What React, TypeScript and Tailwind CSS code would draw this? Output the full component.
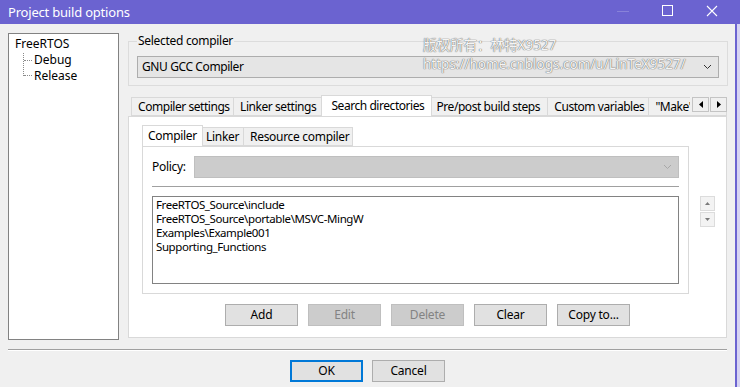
import React from "react";

const FONT = "font-['Segoe_UI','Noto_Sans',sans-serif]";

function Chevron({ color = "#333" }: { color?: string }) {
  return (
    <svg width="9" height="6" viewBox="0 0 9 6" fill="none">
      <path d="M1 1 L4.5 4.5 L8 1" stroke={color} strokeWidth="1" />
    </svg>
  );
}

function Btn({ label, disabled, primary }: { label: string; disabled?: boolean; primary?: boolean }) {
  const base = "w-[73px] h-[22px] flex items-center justify-center text-[12px] leading-none tracking-[-0.2px]";
  if (disabled)
    return <div className={`${base} bg-[#cccccc] border border-[#bfbfbf] text-[#838383]`}>{label}</div>;
  if (primary)
    return <div className={`${base} bg-[#e1e1e1] border-2 border-[#0078d7] text-black`}>{label}</div>;
  return <div className={`${base} bg-[#e1e1e1] border border-[#adadad] text-black`}>{label}</div>;
}

function TitleBar() {
  return (
    <div className="h-[24px] bg-[#6b63d0] flex items-center relative shrink-0">
      <span className="pl-[8px] text-white text-[13px] leading-none tracking-[-0.2px]">Project build options</span>
      <div className="absolute left-[617px] top-[11px] w-[12px] h-px bg-white opacity-20" />
      <div className="absolute left-[662px] top-[5px] w-[11px] h-[11px] border border-white" />
      <svg className="absolute left-[706px] top-[5px]" width="12" height="12" viewBox="0 0 12 12">
        <path d="M1 1 L11 11 M11 1 L1 11" stroke="white" strokeWidth="1.1" />
      </svg>
    </div>
  );
}

function Tree() {
  return (
    <div className="w-[111px] h-[307px] bg-white border border-[#828282] relative shrink-0 text-[12px]">
      <div className="absolute left-[5px] top-[2px] leading-[16px] px-[1px]">FreeRTOS</div>
      <div className="absolute left-[25px] top-[18px] leading-[16px]">Debug</div>
      <div className="absolute left-[25px] top-[34px] leading-[16px]">Release</div>
      <div className="absolute left-[14px] top-[19px] h-[23px] border-l border-dotted border-[#8a8a8a]" />
      <div className="absolute left-[15px] top-[26px] w-[8px] border-t border-dotted border-[#8a8a8a]" />
      <div className="absolute left-[15px] top-[41px] w-[8px] border-t border-dotted border-[#8a8a8a]" />
    </div>
  );
}

function MainTabs() {
  const tab =
    "h-[19px] border border-[#d9d9d9] bg-[#f0f0f0] -ml-px flex items-center text-[12px] tracking-[-0.45px] whitespace-nowrap overflow-hidden";
  return (
    <div className="relative h-[21px] flex items-end pl-[3px] overflow-hidden">
      <div className={`${tab} w-[105px] pl-[6px] ml-0`}>Compiler settings</div>
      <div className={`${tab} w-[92px] pl-[6px]`}>Linker settings</div>
      <div className="h-[21px] w-[113px] -ml-[2px] -mr-[2px] relative z-10 bg-white border border-b-0 border-[#d9d9d9] flex items-center pl-[9px] text-[12px] tracking-[-0.45px] whitespace-nowrap">
        Search directories
      </div>
      <div className={`${tab} w-[121px] pl-[6px]`}>Pre/post build steps</div>
      <div className={`${tab} w-[104px] pl-[6px]`}>Custom variables</div>
      <div className={`${tab} w-[80px] pl-[6px]`}>"Make" commands</div>
      <div className="absolute right-0 top-[2px] h-[15px] w-[37px] bg-[#f0f0f0] flex justify-end gap-[1px] z-20">
        <div className="w-[17px] h-[15px] bg-[#f0f0f0] border border-[#c4c4c4] flex items-center justify-center">
          <svg width="4" height="7" viewBox="0 0 4 7"><path d="M4 0 L0 3.5 L4 7 Z" fill="#000" /></svg>
        </div>
        <div className="w-[17px] h-[15px] bg-[#f0f0f0] border border-[#c4c4c4] flex items-center justify-center">
          <svg width="4" height="7" viewBox="0 0 4 7"><path d="M0 0 L4 3.5 L0 7 Z" fill="#000" /></svg>
        </div>
      </div>
    </div>
  );
}

function SubTabs() {
  const tab = "h-[19px] border border-[#d9d9d9] bg-[#f0f0f0] -ml-px flex items-center text-[12px] tracking-[-0.3px] whitespace-nowrap";
  return (
    <div className="h-[21px] flex items-end">
      <div className="h-[21px] w-[61px] relative z-10 -mr-[2px] bg-white border border-b-0 border-[#d9d9d9] flex items-center pl-[5px] text-[12px] tracking-[-0.3px]">
        Compiler
      </div>
      <div className={`${tab} w-[44px] pl-[5px]`}>Linker</div>
      <div className={`${tab} w-[110px] pl-[6px]`}>Resource compiler</div>
    </div>
  );
}

function Spin() {
  return (
    <div className="flex flex-col gap-px ml-[11px] mt-[71px]">
      <div className="w-[15px] h-[15px] bg-[#f3f3f3] border border-[#dcdcdc] flex items-center justify-center">
        <svg width="5" height="3" viewBox="0 0 5 3"><path d="M0 3 L2.5 0 L5 3 Z" fill="#7a7a7a" /></svg>
      </div>
      <div className="w-[15px] h-[15px] bg-[#f3f3f3] border border-[#dcdcdc] flex items-center justify-center">
        <svg width="5" height="3" viewBox="0 0 5 3"><path d="M0 0 L2.5 3 L5 0 Z" fill="#7a7a7a" /></svg>
      </div>
    </div>
  );
}

export default function App() {
  const dirs = [
    "FreeRTOS_Source\\include",
    "FreeRTOS_Source\\portable\\MSVC-MingW",
    "Examples\\Example001",
    "Supporting_Functions",
  ];
  return (
    <div className={`w-[740px] h-[387px] bg-[#f0f0f0] flex flex-col overflow-hidden text-black ${FONT}`}>
      <TitleBar />
      <div className="flex-1 flex">
        <div className="w-[735px] flex flex-col">
          <div className="flex pt-[9px] pl-[8px] gap-[9px]">
            <Tree />
            <div className="w-[599px] flex flex-col relative">
              <fieldset className="border border-[#dcdcdc] px-[8px] pb-[7px]">
                <legend className="px-[1px] leading-[16px] text-[12px] tracking-[-0.3px]">Selected compiler</legend>
                <div className="mt-[7px] h-[22px] w-[582px] bg-[#e5e5e5] border border-[#adadad] flex items-center justify-between pl-[4px] pr-[6px] text-[12px] tracking-[-0.4px]">
                  <span>GNU GCC Compiler</span>
                  <Chevron />
                </div>
              </fieldset>
              <div className="absolute left-[295px] top-[3px] text-[13.5px] leading-[19px] text-[#f4f4f4] [text-shadow:0_0_1px_#666,0_0_1px_#666] pointer-events-none font-['Noto_Sans','Noto_Sans_CJK_SC',sans-serif]">
                <div>版权所有：林特X9527</div>
                <div>https://home.cnblogs.com/u/LinTeX9527/</div>
              </div>
              <div className="mt-[9px]">
                <MainTabs />
                <div className="h-[222px] bg-white border border-[#d9d9d9] flex flex-col">
                  <div className="flex pl-[13px] pt-[8px]">
                    <div className="flex flex-col">
                      <SubTabs />
                      <div className="w-[547px] h-[148px] border border-[#d9d9d9] bg-white pt-[9px] pl-[9px]">
                        <div className="flex items-center h-[22px]">
                          <span className="w-[42px] text-[12px] tracking-[-0.3px]">Policy:</span>
                          <div className="w-[485px] h-[22px] bg-[#cccccc] border border-[#bfbfbf] flex items-center justify-end pr-[6px]">
                            <Chevron color="#a8a8a8" />
                          </div>
                        </div>
                        <div className="mt-[8px] w-[527px] h-[2px] border-t border-[#a0a0a0] border-b border-b-white" />
                        <div className="mt-[8px] w-[527px] h-[88px] border border-[#828282] bg-white pl-[3px] pt-px text-[11.5px] tracking-[-0.4px] leading-[14px]">
                          {dirs.map((d) => (
                            <div key={d} className="whitespace-nowrap">{d}</div>
                          ))}
                        </div>
                      </div>
                    </div>
                    <Spin />
                  </div>
                  <div className="mt-[10px] flex justify-center gap-[10px]">
                    <Btn label="Add" />
                    <Btn label="Edit" disabled />
                    <Btn label="Delete" disabled />
                    <Btn label="Clear" />
                    <Btn label="Copy to..." />
                  </div>
                </div>
              </div>
            </div>
          </div>
          <div className="mt-[9px] ml-[8px] w-[719px] h-[2px] border-t border-[#a0a0a0] border-b border-b-white" />
          <div className="mt-[9px] flex justify-center gap-[9px]">
            <Btn label="OK" primary />
            <Btn label="Cancel" />
          </div>
        </div>
        <div className="w-[2px] bg-[#6b63d0]" />
        <div className="w-[3px] bg-[#d6d3f2]" />
      </div>
    </div>
  );
}
